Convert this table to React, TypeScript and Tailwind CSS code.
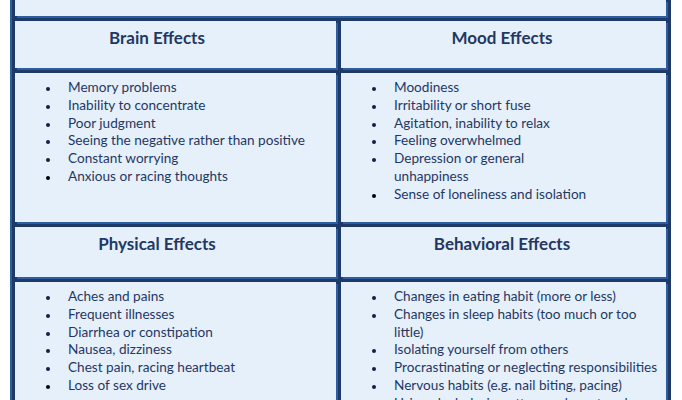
const brain = [
  "Memory problems",
  "Inability to concentrate",
  "Poor judgment",
  "Seeing the negative rather than positive",
  "Constant worrying",
  "Anxious or racing thoughts",
];

const mood = [
  "Moodiness",
  "Irritability or short fuse",
  "Agitation, inability to relax",
  "Feeling overwhelmed",
  "Depression or general\nunhappiness",
  "Sense of loneliness and isolation",
];

const physical = [
  "Aches and pains",
  "Frequent illnesses",
  "Diarrhea or constipation",
  "Nausea, dizziness",
  "Chest pain, racing heartbeat",
  "Loss of sex drive",
];

const behavioral = [
  "Changes in eating habit (more or less)",
  "Changes in sleep habits (too much or too little)",
  "Isolating yourself from others",
  "Procrastinating or neglecting responsibilities",
  "Nervous habits (e.g. nail biting, pacing)",
  "Using alcohol, cigarettes, or drugs to relax",
];

function Cell({ children, className = "" }: { children?: React.ReactNode; className?: string }) {
  return (
    <div className={`bg-[#e6f0fb] shadow-[2px_2px_0_#2e5e9f] ${className}`}>{children}</div>
  );
}

function Heading({ text, right }: { text: string; right?: boolean }) {
  return (
    <Cell className={`pt-[7px] text-center ${right ? "pr-[3px]" : "pr-[37px]"}`}>
      <h2 className="text-[17px] font-bold leading-[20px] text-[#1f3864]">{text}</h2>
    </Cell>
  );
}

function Effects({ items }: { items: string[] }) {
  return (
    <Cell className="pt-[6px] pl-[31px] pr-[3px]">
      <ul className="text-[13.6px] leading-[17.8px] text-[#1f3864]">
        {items.map((item, i) => (
          <li key={item} className="flex">
            <span className="w-[22px] shrink-0 pt-[8px]">
              <span
                className={`block w-[4px] h-[4px] rounded-full ${
                  i === items.length - 1 ? "bg-black" : "bg-[#0f2148]"
                }`}
              />
            </span>
            <span className="whitespace-pre-line">{item}</span>
          </li>
        ))}
      </ul>
    </Cell>
  );
}

export default function App() {
  return (
    <div
      className="h-[400px] overflow-hidden bg-white pl-[10px]"
      style={{ fontFamily: "Lato, 'Liberation Sans', sans-serif" }}
    >
      <div className="w-[661px] h-[420px] bg-[#1e3a68] border-l-2 border-[#2e5e9f] pl-[3px] pr-[5px] grid grid-cols-[321px_325px] grid-rows-[16px_47px_149px_50px_158px] gap-[5px]">
        <Cell className="col-span-2" />
        <Heading text="Brain Effects" />
        <Heading text="Mood Effects" right />
        <Effects items={brain} />
        <Effects items={mood} />
        <Heading text="Physical Effects" />
        <Heading text="Behavioral Effects" right />
        <Effects items={physical} />
        <Effects items={behavioral} />
      </div>
    </div>
  );
}
